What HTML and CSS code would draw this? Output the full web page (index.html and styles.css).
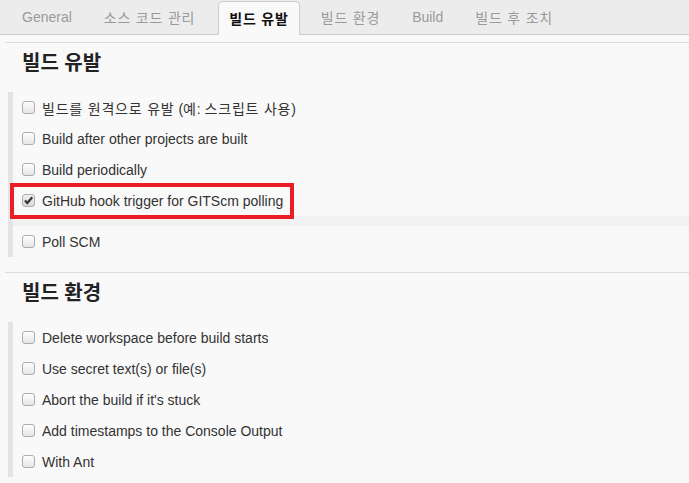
FILE: index.html
```html
<!DOCTYPE html>
<html lang="ko">
<head>
<meta charset="utf-8">
<title>빌드 유발</title>
<link rel="stylesheet" href="styles.css">
</head>
<body>
<nav class="tabbar">
  <span class="tab">General</span>
  <span class="tab ko">소스 코드 관리</span>
  <span class="tab ko active">빌드 유발</span>
  <span class="tab ko">빌드 환경</span>
  <span class="tab">Build</span>
  <span class="tab ko">빌드 후 조치</span>
</nav>
<main class="content">
  <section class="section">
    <h2 class="heading">빌드 유발</h2>
    <div class="block">
      <label class="row"><span class="cb"></span><span><span class="ko">빌드를 원격으로 유발</span> (<span class="ko">예</span>: <span class="ko">스크립트 사용</span>)</span></label>
      <label class="row"><span class="cb"></span><span>Build after other projects are built</span></label>
      <label class="row"><span class="cb"></span><span>Build periodically</span></label>
      <label class="row highlight"><span class="cb checked"><svg viewBox="0 0 13 13" width="13" height="13"><path d="M3 6.5 L5.3 9 L10.2 3.2" fill="none" stroke="#333" stroke-width="2.2" stroke-linecap="butt"/></svg></span><span>GitHub hook trigger for GITScm polling</span><span class="redbox"></span></label>
      <div class="band"></div>
      <label class="row"><span class="cb"></span><span>Poll SCM</span></label>
    </div>
  </section>
  <section class="section">
    <h2 class="heading">빌드 환경</h2>
    <div class="block">
      <label class="row"><span class="cb"></span><span>Delete workspace before build starts</span></label>
      <label class="row"><span class="cb"></span><span>Use secret text(s) or file(s)</span></label>
      <label class="row"><span class="cb"></span><span>Abort the build if it's stuck</span></label>
      <label class="row"><span class="cb"></span><span>Add timestamps to the Console Output</span></label>
      <label class="row"><span class="cb"></span><span>With Ant</span></label>
    </div>
  </section>
</main>
</body>
</html>
```
FILE: styles.css
```css
html, body {
  margin: 0;
  padding: 0;
}
body {
  background: #f9f9f9;
  font-family: "Liberation Sans", Arial, "Noto Sans CJK KR", sans-serif;
  font-size: 14px;
  color: #333;
  overflow: hidden;
}
.ko {
  letter-spacing: 0.8px;
}
.tabbar {
  display: flex;
  align-items: flex-end;
  height: 34px;
  background: #ececec;
  border-bottom: 1px solid #c9c9c9;
  padding-left: 11px;
  gap: 10px;
}
.tab {
  display: flex;
  align-items: center;
  height: 33px;
  padding: 0 11px;
  padding-bottom: 1px;
  color: #9a9a9a;
  white-space: nowrap;
  box-sizing: border-box;
}
.tab.ko {
  letter-spacing: 0.8px;
}
.tab.active {
  background: #f9f9f9;
  color: #111;
  font-weight: bold;
  border: 1px solid #cdcdcd;
  border-bottom: none;
  border-radius: 5px 5px 0 0;
  height: 34px;
  margin-bottom: -1px;
  margin-left: 2px;
  padding: 0 10px 1px 10px;
}
.content {
  padding-top: 7px;
}
.section {
  border-top: 1px solid #dcdcdc;
  margin-left: 5px;
  margin-bottom: 15px;
}
.heading {
  margin: 6px 0 15px 17px;
  font-size: 20px;
  line-height: 28px;
  font-weight: bold;
  color: #222;
}
.block {
  margin-left: 3px;
  border-left: 5px solid #e4e4e4;
}
.row {
  position: relative;
  display: flex;
  align-items: center;
  height: 31px;
  padding-left: 9px;
  gap: 7px;
  white-space: nowrap;
}
.cb {
  width: 13px;
  height: 13px;
  box-sizing: border-box;
  border: 1px solid #adadad;
  border-radius: 3px;
  background: linear-gradient(#fdfdfd, #e6e6e6);
  flex: none;
  display: flex;
  margin-top: -1px;
}
.cb.checked {
  background: linear-gradient(#f0f0f0, #d9d9d9);
}
.cb svg {
  margin: -1px;
}
.band {
  height: 10px;
  background: #f1f1f1;
}
.redbox {
  position: absolute;
  left: -3px;
  top: -2px;
  width: 284px;
  height: 36px;
  box-sizing: border-box;
  border: 4px solid #ec1c24;
}
```
